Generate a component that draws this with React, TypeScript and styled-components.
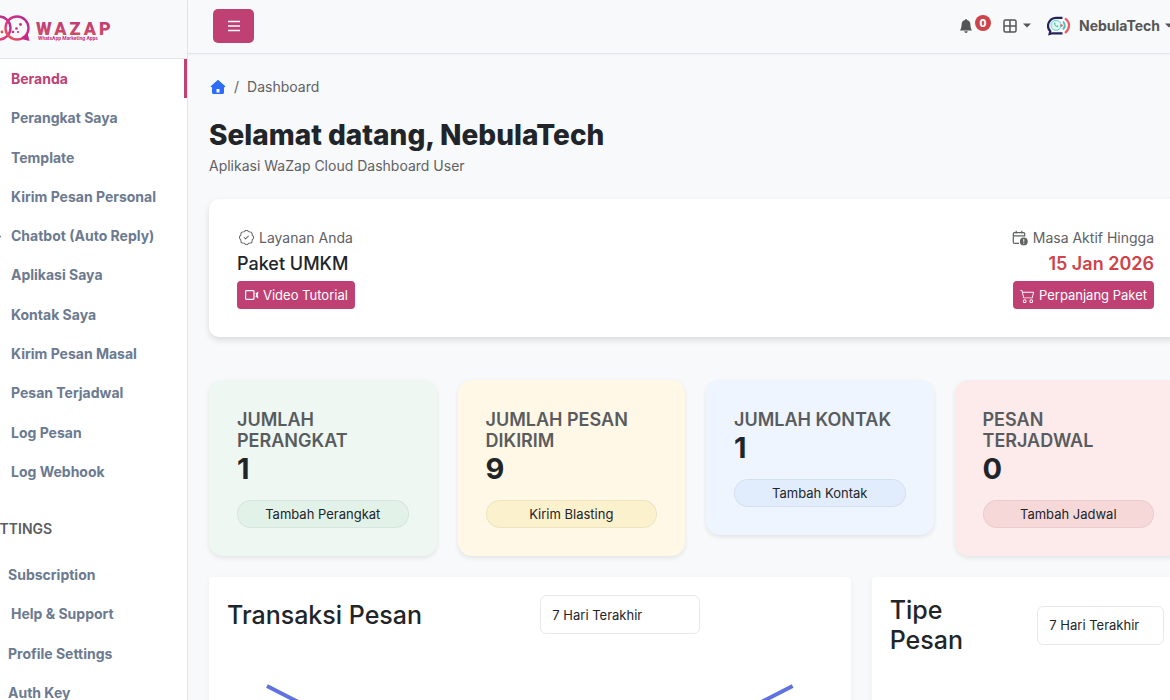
import React from "react";
import styled, { createGlobalStyle } from "styled-components";
import { BsBellFill, BsPatchCheck, BsCart2 } from "react-icons/bs";

const GlobalStyle = createGlobalStyle`
  *, *::before, *::after { box-sizing: border-box; }
  body {
    margin: 0;
    background: #f8f9fb;
    color: #212529;
    font-family: Inter, "Liberation Sans", sans-serif;
    font-size: 14px;
    line-height: 21px;
  }
  button, select { font-family: inherit; }
  a { color: inherit; text-decoration: none; }
  h1, h2, h3, p, ul, ol { margin: 0; padding: 0; }
  ul, ol { list-style: none; }
`;

const BRAND = "#bf4174";

const Shell = styled.div`
  display: flex;
  height: 100vh;
  overflow: hidden;
`;

const Sidebar = styled.aside`
  flex: none;
  width: 188px;
  overflow: hidden;
  background: #fff;
  border-right: 1px solid #e3e5e9;
`;

const Brand = styled.a`
  display: block;
  height: 59px;
  background: #f8f9fb;
  border-bottom: 1px solid #e3e5e9;
  svg { display: block; }
`;

const NavList = styled.ul<{ $height: number }>`
  display: grid;
  grid-auto-rows: 1fr;
  height: ${(p) => p.$height}px;
`;

const NavLink = styled.a<{ $active?: boolean; $tight?: boolean }>`
  display: flex;
  align-items: center;
  height: 100%;
  padding-left: ${(p) => (p.$tight ? 8 : 11)}px;
  border-right: 3px solid ${(p) => (p.$active ? BRAND : "transparent")};
  color: ${(p) => (p.$active ? BRAND : "#6b7a90")};
  font-weight: 700;
  white-space: nowrap;
`;

const Expander = styled.svg`
  flex: none;
  margin-left: -20px;
  margin-right: 10px;
`;

const NavCaption = styled.h3`
  margin: 27px 0 16px -18px;
  color: #5a5c5f;
  font-size: 14px;
  line-height: 21px;
  font-weight: 600;
`;

const Main = styled.main`
  flex: 1;
  min-width: 0;
  margin-right: -12px;
`;

const Topbar = styled.header`
  display: flex;
  align-items: center;
  justify-content: space-between;
  height: 54px;
  padding: 0 9px 2px 25px;
  border-bottom: 1px solid #e3e5e9;
  box-shadow: 0 1px 2px rgba(0, 0, 0, 0.04);
`;

const MenuButton = styled.button`
  display: grid;
  place-items: center;
  width: 41px;
  height: 34px;
  padding: 0;
  border: 0;
  border-radius: 5px;
  background: ${BRAND};
`;

const Tools = styled.div`
  display: flex;
  align-items: center;
  color: #555;
`;

const ToolButton = styled.button<{ $gap: number; $before?: number }>`
  position: relative;
  display: flex;
  align-items: center;
  gap: ${(p) => p.$gap}px;
  margin-left: ${(p) => p.$before ?? 0}px;
  padding: 0;
  border: 0;
  background: none;
  color: #555;
  font-size: 14px;
  font-weight: 700;
`;

const UserName = styled.span`
  display: flex;
  align-items: center;
  gap: 5px;
`;

const Badge = styled.span`
  position: absolute;
  left: 16px;
  top: -4px;
  width: 16px;
  height: 16px;
  border-radius: 8px;
  background: #cb444a;
  color: #fff;
  font-size: 10px;
  line-height: 16px;
  font-weight: 800;
  text-align: center;
`;

const Page = styled.div`
  padding: 22px 0 22px 21px;
`;

const Crumbs = styled.ol`
  display: flex;
  align-items: center;
  padding-left: 1px;
  color: #5f6163;
  li, a { display: flex; align-items: center; }
  li + li::before { content: "/"; padding: 0 8px; }
`;

const Title = styled.h1`
  margin-top: 20px;
  font-size: 28px;
  line-height: 36px;
  font-weight: 800;
`;

const Lead = styled.p`
  margin-top: 2px;
  color: #5f6163;
`;

const Plan = styled.section`
  display: flex;
  justify-content: space-between;
  margin: 23px 0 43px;
  padding: 28px;
  border-radius: 10px;
  background: #fff;
  box-shadow: 0 3px 6px rgba(0, 0, 0, 0.12);
`;

const PlanSide = styled.div<{ $end?: boolean }>`
  display: flex;
  flex-direction: column;
  align-items: ${(p) => (p.$end ? "flex-end" : "flex-start")};
`;

const PlanLabel = styled.p`
  display: flex;
  align-items: center;
  gap: 5px;
  padding-left: 2px;
  color: #5f6163;
`;

const PlanValue = styled.h2<{ $danger?: boolean }>`
  margin: 5px 0 6px;
  color: ${(p) => (p.$danger ? "#cf4248" : "inherit")};
  font-size: 18px;
  line-height: 22px;
  font-weight: ${(p) => (p.$danger ? 600 : 500)};
`;

const ActionButton = styled.button`
  display: flex;
  align-items: center;
  gap: 4px;
  height: 28px;
  padding: 0 7px;
  border: 0;
  border-radius: 4px;
  background: ${BRAND};
  color: #fff;
  font-size: 13px;
`;

const Grid = styled.div`
  display: grid;
  grid-template-columns: repeat(12, minmax(0, 1fr));
  align-items: start;
  gap: 21px;
  margin-bottom: 21px;
`;

const StatCard = styled.article<{ $bg: string }>`
  grid-column: span 3;
  padding: 29px 28px 28px;
  border-radius: 14px;
  background: ${(p) => p.$bg};
  box-shadow: 0 2px 5px rgba(0, 0, 0, 0.09);
`;

const StatLabel = styled.h2`
  color: #595c5e;
  font-size: 18px;
  line-height: 21px;
  font-weight: 600;
`;

const StatValue = styled.p`
  font-size: 29px;
  line-height: 35px;
  font-weight: 700;
`;

const PillButton = styled.button<{ $bg: string }>`
  display: block;
  width: 100%;
  height: 28px;
  margin-top: 14px;
  padding: 0;
  border: 1px solid rgba(0, 0, 0, 0.05);
  border-radius: 14px;
  background: ${(p) => p.$bg};
  color: #212529;
  font-size: 13px;
`;

const Panel = styled.section<{ $span: number }>`
  grid-column: span ${(p) => p.$span};
  min-height: 320px;
  padding: 18px;
  border-radius: 4px;
  background: #fff;
  box-shadow: 0 2px 6px rgba(0, 0, 0, 0.05);
`;

const PanelHead = styled.div`
  display: grid;
  grid-template-columns: 1fr 1fr;
  gap: 21px;
  align-items: center;
`;

const PanelTitle = styled.h2`
  font-size: 25px;
  line-height: 30px;
  font-weight: 500;
`;

const RangeSelect = styled.select`
  appearance: none;
  width: 100%;
  max-width: 160px;
  height: 39px;
  padding: 0 11px;
  border: 1px solid #e6e8ea;
  border-radius: 6px;
  background: #fff;
  color: #212529;
  font-size: 13px;
`;

const Chart = styled.svg`
  display: block;
  width: 100%;
  margin-top: 22px;
`;

const menuItems = [
  "Beranda",
  "Perangkat Saya",
  "Template",
  "Kirim Pesan Personal",
  "Chatbot (Auto Reply)",
  "Aplikasi Saya",
  "Kontak Saya",
  "Kirim Pesan Masal",
  "Pesan Terjadwal",
  "Log Pesan",
  "Log Webhook",
];

const settingsItems = [
  { label: "Subscription", tight: true },
  { label: "Help & Support", tight: false },
  { label: "Profile Settings", tight: true },
  { label: "Auth Key", tight: true },
];

const stats = [
  { label: "JUMLAH PERANGKAT", value: 1, action: "Tambah Perangkat", bg: "#eef7f2", pill: "#e2f2e9" },
  { label: "JUMLAH PESAN DIKIRIM", value: 9, action: "Kirim Blasting", bg: "#fff8e7", pill: "#fcf1cd" },
  { label: "JUMLAH KONTAK", value: 1, action: "Tambah Kontak", bg: "#eef5fe", pill: "#e1edfc" },
  { label: "PESAN TERJADWAL", value: 0, action: "Tambah Jadwal", bg: "#fcebea", pill: "#f7d8d8" },
];

const Logo = () => (
  <svg width="120" height="58" viewBox="0 0 120 58" role="img" aria-label="Wazap">
    <defs>
      <linearGradient id="ring" x1="0" y1="1" x2="1" y2="0">
        <stop offset="0" stopColor="#e8604a" />
        <stop offset="0.45" stopColor="#dd2f87" />
        <stop offset="1" stopColor="#a8318d" />
      </linearGradient>
      <linearGradient id="word" x1="0" y1="0" x2="0" y2="1">
        <stop offset="0" stopColor="#b8397f" />
        <stop offset="1" stopColor="#d5505c" />
      </linearGradient>
    </defs>
    <g fill="none" stroke="url(#ring)" strokeWidth="2.4">
      <circle cx="-1" cy="28" r="11.5" />
      <circle cx="17" cy="28" r="11.5" />
    </g>
    <path d="M21.500 39 27.600 33.500 29.500 41Z" fill="#c02a86" />
    <g fill="#c72f86">
      <circle cx="13" cy="32" r="1.300" />
      <circle cx="16.500" cy="28.500" r="1.300" />
      <circle cx="18" cy="32" r="1.100" />
      <circle cx="20.500" cy="24.500" r="1.400" />
      <circle cx="2" cy="32" r="1.400" fill="#e0524f" />
    </g>
    <text x="36" y="35" fill="url(#word)" fontFamily="Roboto, sans-serif" fontWeight="900" fontSize="18" letterSpacing="3">WAZAP</text>
    <text x="38" y="40" fill="#c72f86" fontFamily="Roboto, sans-serif" fontWeight="700" fontSize="5">WhatsApp Marketing Apps</text>
  </svg>
);

const Caret = () => (
  <svg width="8" height="5" viewBox="0 0 8 5" aria-hidden="true">
    <path d="M0 0.500H8L4 4.500Z" fill="currentColor" />
  </svg>
);

const WindowIcon = () => (
  <svg width="14" height="14" viewBox="0 0 14 14" fill="none" stroke="currentColor" strokeWidth="1.5" aria-hidden="true">
    <rect x="1" y="1" width="12" height="12" rx="1.5" />
    <path d="M7 1V13M1 7H13" />
  </svg>
);

const HomeIcon = () => (
  <svg width="16" height="16" viewBox="0 0 16 16" aria-hidden="true">
    <path
      fill="#2c6cf6"
      fillRule="evenodd"
      d="M8 .8 15.300 7.300Q15.400 8.300 14.500 8.300H14V13.500Q14 15 12.500 15H3.500Q2 15 2 13.500V8.300H1.500Q.6 8.300.7 7.300ZM6.500 10V13.500H9.500V10Z"
    />
  </svg>
);

const VideoIcon = () => (
  <svg width="15" height="12" viewBox="0 0 15 12" fill="none" stroke="currentColor" aria-hidden="true">
    <rect x="1.600" y="1.600" width="8.400" height="8.800" rx="0.800" strokeWidth="1.200" />
    <path d="M11.400 4.400 14.200 2.400V5.200L13.200 6 14.200 6.800V9.600L11.400 7.600L12.400 6Z" fill="currentColor" stroke="none" />
  </svg>
);

const CalendarAlertIcon = () => (
  <svg width="16" height="16" viewBox="0 0 16 16" fill="none" stroke="currentColor" strokeWidth="1.200" aria-hidden="true">
    <path d="M7 13.400H2.500Q1.300 13.400 1.300 12.200V3.800Q1.300 2.600 2.500 2.600H11.500Q12.700 2.600 12.700 3.800V6.500M1.300 5.800H12.700M4.200.8V3.500M9.800.8V3.500" />
    <circle cx="11.800" cy="11.400" r="3.900" fill="currentColor" stroke="none" />
    <path d="M11.800 9V11.900M11.800 12.700V13.800" stroke="#fff" strokeWidth="1" />
  </svg>
);

const Avatar = () => (
  <svg width="24" height="20" viewBox="0 0 24 20" fill="none" aria-hidden="true">
    <path d="M15.500 1.800H9A8 8 0 0 0 3.300 15.300L2.600 18 5.500 17.300H15.500" stroke="#25235c" strokeWidth="2.200" />
    <circle cx="9" cy="9.300" r="5" stroke="#62d3c6" strokeWidth="1" fill="#dff7f3" />
    <path d="M7 7Q7.300 10.700 11 11.300L11.500 10 10 9.300 9.300 9.900Q8.500 9.400 8.200 8.500L8.700 7.900 8 6.500Z" fill="#43c4b6" />
    <circle cx="14.500" cy="9.500" r="1.200" fill="#ef5b62" />
    <path d="M16 5.500Q19.500 9.500 16 13.500" stroke="#43c4b6" strokeWidth="1.800" />
    <path d="M18 2.300Q22.300 5.500 22 9.800 21.700 14 18 17" stroke="#ef5b62" strokeWidth="2.200" />
  </svg>
);

export default function App() {
  return (
    <>
      <GlobalStyle />
      <Shell>
        <Sidebar>
          <Brand href="#">
            <Logo />
          </Brand>
          <nav aria-label="Menu">
            <NavList $height={432}>
              {menuItems.map((label, i) => (
                <li key={label}>
                  <NavLink href="#" $active={i === 0}>
                    {label.startsWith("Chatbot") && (
                      <Expander width="10" height="10" viewBox="0 0 10 10" aria-hidden="true">
                        <path d="M5 1.500 8.800 5.500 5 9.500" fill="none" stroke="currentColor" strokeWidth="2" />
                      </Expander>
                    )}
                    {label}
                  </NavLink>
                </li>
              ))}
            </NavList>
            <NavCaption>SETTINGS</NavCaption>
            <NavList $height={157}>
              {settingsItems.map((item) => (
                <li key={item.label}>
                  <NavLink href="#" $tight={item.tight}>
                    {item.label}
                  </NavLink>
                </li>
              ))}
            </NavList>
          </nav>
        </Sidebar>

        <Main>
          <Topbar>
            <MenuButton type="button" aria-label="Toggle menu">
              <svg width="12" height="12" viewBox="0 0 12 12" stroke="#fff" strokeWidth="1.600" aria-hidden="true">
                <path d="M0 1.500H12M0 6H12M0 10.500H12" />
              </svg>
            </MenuButton>
            <Tools>
              <ToolButton type="button" $gap={0} aria-label="Notifications">
                <BsBellFill size={14} />
                <Badge>0</Badge>
              </ToolButton>
              <ToolButton type="button" $gap={6} $before={30} aria-label="Apps">
                <WindowIcon />
                <Caret />
              </ToolButton>
              <ToolButton type="button" $gap={8} $before={16}>
                <Avatar />
                <UserName>
                  NebulaTech
                  <Caret />
                </UserName>
              </ToolButton>
            </Tools>
          </Topbar>

          <Page>
            <nav aria-label="Breadcrumb">
              <Crumbs>
                <li>
                  <a href="#" aria-label="Home">
                    <HomeIcon />
                  </a>
                </li>
                <li>Dashboard</li>
              </Crumbs>
            </nav>
            <Title>Selamat datang, NebulaTech</Title>
            <Lead>Aplikasi WaZap Cloud Dashboard User</Lead>

            <Plan>
              <PlanSide>
                <PlanLabel>
                  <BsPatchCheck size={15} />
                  Layanan Anda
                </PlanLabel>
                <PlanValue>Paket UMKM</PlanValue>
                <ActionButton type="button">
                  <VideoIcon />
                  Video Tutorial
                </ActionButton>
              </PlanSide>
              <PlanSide $end>
                <PlanLabel>
                  <CalendarAlertIcon />
                  Masa Aktif Hingga
                </PlanLabel>
                <PlanValue $danger>15 Jan 2026</PlanValue>
                <ActionButton type="button">
                  <BsCart2 size={15} />
                  Perpanjang Paket
                </ActionButton>
              </PlanSide>
            </Plan>

            <Grid>
              {stats.map((s) => (
                <StatCard key={s.label} $bg={s.bg}>
                  <StatLabel>{s.label}</StatLabel>
                  <StatValue>{s.value}</StatValue>
                  <PillButton type="button" $bg={s.pill}>
                    {s.action}
                  </PillButton>
                </StatCard>
              ))}
            </Grid>

            <Grid>
              <Panel $span={8}>
                <PanelHead>
                  <PanelTitle>Transaksi Pesan</PanelTitle>
                  <RangeSelect aria-label="Rentang Transaksi Pesan">
                    <option>7 Hari Terakhir</option>
                  </RangeSelect>
                </PanelHead>
                <Chart viewBox="0 0 606 200" aria-hidden="true">
                  <path d="M40 30 303 165 566 30" fill="none" stroke="#5f72e0" strokeWidth="4" />
                </Chart>
              </Panel>
              <Panel $span={4}>
                <PanelHead>
                  <PanelTitle>Tipe Pesan</PanelTitle>
                  <RangeSelect aria-label="Rentang Tipe Pesan">
                    <option>7 Hari Terakhir</option>
                  </RangeSelect>
                </PanelHead>
              </Panel>
            </Grid>
          </Page>
        </Main>
      </Shell>
    </>
  );
}
